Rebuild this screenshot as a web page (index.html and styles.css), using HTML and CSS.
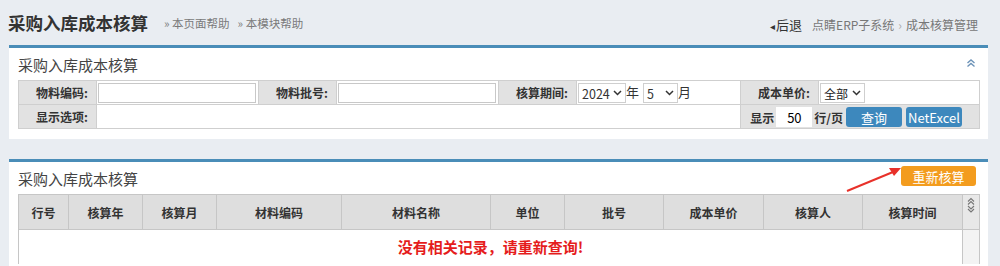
FILE: index.html
```html
<!DOCTYPE html>
<html lang="zh-CN">
<head>
    <meta charset="UTF-8">
    <meta name="viewport" content="width=device-width, initial-scale=1.0">
    <title>采购入库成本核算</title>
    <link rel="stylesheet" href="styles.css">
</head>
<body>
    <!-- Judul halaman dan breadcrumb -->
    <div class="page-header">
        <div class="page-title">
            <h1>采购入库成本核算</h1>
            <a class="help" href="#">» 本页面帮助</a>
            <a class="help" href="#">» 本模块帮助</a>
        </div>
        <div class="crumbs">
            <a class="back" href="#"><span class="tri">◂</span>后退</a>
            <span>点睛ERP子系统</span>
            <span class="sep">›</span>
            <span>成本核算管理</span>
        </div>
    </div>

    <!-- Panel pencarian -->
    <div class="panel">
        <div class="panel-head">
            <span class="panel-title">采购入库成本核算</span>
            <svg class="collapse" width="10" height="10" viewBox="0 0 10 10">
                <path d="M1.5 5 L5 2 L8.5 5 M1.5 8.5 L5 5.5 L8.5 8.5" fill="none" stroke="#6d93b8" stroke-width="1.4"/>
            </svg>
        </div>
        <table class="search">
            <colgroup>
                <col style="width:78px"><col style="width:162px">
                <col style="width:78px"><col style="width:162px">
                <col style="width:78px"><col style="width:164px">
                <col style="width:78px"><col style="width:161px">
            </colgroup>
            <tr>
                <td class="label">物料编码:</td>
                <td><input class="txt" type="text"></td>
                <td class="label">物料批号:</td>
                <td><input class="txt" type="text"></td>
                <td class="label">核算期间:</td>
                <td>
                    <span class="sel sel-year">2024<svg width="9" height="6" viewBox="0 0 9 6"><path d="M1 1 L4.5 4.5 L8 1" fill="none" stroke="#333" stroke-width="1.5"/></svg></span>年
                    <span class="sel sel-month">5<svg width="9" height="6" viewBox="0 0 9 6"><path d="M1 1 L4.5 4.5 L8 1" fill="none" stroke="#333" stroke-width="1.5"/></svg></span>月
                </td>
                <td class="label">成本单价:</td>
                <td><span class="sel sel-all">全部<svg width="9" height="6" viewBox="0 0 9 6"><path d="M1 1 L4.5 4.5 L8 1" fill="none" stroke="#333" stroke-width="1.5"/></svg></span></td>
            </tr>
            <tr>
                <td class="label">显示选项:</td>
                <td colspan="5"></td>
                <td colspan="2" class="actions"><span class="b">显示</span><input class="rows" type="text" value="50"><span class="b">行/页</span><button class="btn btn-blue btn-query">查询</button><button class="btn btn-blue">NetExcel</button></td>
            </tr>
        </table>
    </div>

    <!-- Panel hasil -->
    <div class="panel panel-result">
        <div class="panel-head">
            <span class="panel-title">采购入库成本核算</span>
            <button class="btn btn-orange">重新核算</button>
        </div>
        <table class="grid">
            <colgroup>
                <col style="width:50px"><col style="width:74px"><col style="width:74px">
                <col style="width:125px"><col style="width:149px"><col style="width:74px">
                <col style="width:99px"><col style="width:100px"><col style="width:99px">
                <col style="width:100px"><col style="width:17px">
            </colgroup>
            <tr>
                <th>行号</th>
                <th>核算年</th>
                <th>核算月</th>
                <th>材料编码</th>
                <th>材料名称</th>
                <th>单位</th>
                <th>批号</th>
                <th>成本单价</th>
                <th>核算人</th>
                <th>核算时间</th>
                <th class="scroll">
                    <svg width="10" height="16" viewBox="0 0 10 16">
                        <path d="M2 4.5 L5 1.5 L8 4.5 M2 7.5 L5 4.5 L8 7.5 M2 9 L5 12 L8 9 M2 12 L5 15 L8 12" fill="none" stroke="#777" stroke-width="1.1"/>
                    </svg>
                </th>
            </tr>
            <tr>
                <td colspan="10" class="empty">没有相关记录，请重新查询!</td>
                <td class="scroll-body"></td>
            </tr>
        </table>
        <!-- Panah petunjuk ke tombol -->
        <svg class="arrow" width="60" height="30" viewBox="0 0 60 30">
            <path d="M2 27 L48 8" stroke="#e8312a" stroke-width="2" fill="none"/>
            <path d="M56 4 L44 4 L49 12 Z" fill="#e8312a"/>
        </svg>
    </div>
</body>
</html>
```

FILE: styles.css
```css
/* Reset dasar */
* {
    margin: 0;
    padding: 0;
    box-sizing: border-box;
}

body {
    background-color: #e9edf2;
    font-family: "Noto Sans CJK SC", "Noto Sans", sans-serif;
    font-size: 13px;
    color: #333;
    width: 1000px;
    height: 266px;
    overflow: hidden;
}

a {
    text-decoration: none;
}

/* Header halaman */
.page-header {
    height: 45px;
    display: flex;
    justify-content: space-between;
    align-items: center;
    padding: 0 22px 0 8px;
}

.page-title {
    display: flex;
    align-items: center;
}

.page-title h1 {
    font-size: 17.5px;
    font-weight: bold;
    color: #333;
    margin-right: 16px;
}

.help {
    font-size: 11.5px;
    color: #7a7a7a;
    margin-right: 8px;
}

.crumbs {
    display: flex;
    align-items: center;
    font-size: 12px;
    color: #777;
    padding-top: 4px;
}

.crumbs .back {
    color: #333;
    font-size: 13px;
    margin-right: 10px;
}

.crumbs .tri {
    font-size: 10px;
    margin-right: 1px;
}

.crumbs .sep {
    margin: 0 4px;
    color: #aaa;
}

/* Panel */
.panel {
    position: relative;
    margin-left: 9px;
    width: 979px;
    background-color: #fff;
    border-top: 3px solid #4a8db8;
    padding: 0 9px 10px 9px;
}

.panel-head {
    height: 32px;
    display: flex;
    justify-content: space-between;
    align-items: center;
}

.panel-title {
    font-size: 15px;
    color: #444;
}

.collapse {
    margin-right: 3px;
    margin-top: -2px;
}

/* Tabel pencarian */
.search {
    width: 961px;
    border-collapse: collapse;
    table-layout: fixed;
}

.search td {
    height: 24px;
    border: 1px solid #cfcfcf;
    padding: 0 1px;
    white-space: nowrap;
}

.search .label {
    background-color: #e2e2e2;
    text-align: right;
    font-weight: bold;
    font-size: 12px;
    padding-right: 8px;
}

.txt {
    width: 158px;
    height: 20px;
    border: 1px solid #c8c8c8;
    font-family: inherit;
    display: block;
}

.sel {
    display: inline-flex;
    align-items: center;
    justify-content: space-between;
    gap: 2px;
    height: 20px;
    border: 1px solid #cfcfcf;
    background-color: #fff;
    padding: 0 3px;
    vertical-align: middle;
    font-size: 12.5px;
}

.sel svg {
    flex-shrink: 0;
}

.sel-year {
    width: 48px;
}

.sel-month {
    width: 35px;
    margin-left: 1px;
}

.sel-all {
    width: 45px;
    font-size: 12px;
    color: #222;
}

.actions {
    background-color: #e2e2e2;
    text-align: right;
    padding-right: 17px !important;
}

.b {
    font-weight: bold;
    font-size: 12px;
    vertical-align: middle;
}

.rows {
    width: 36px;
    height: 20px;
    border: none;
    text-align: center;
    font-family: inherit;
    font-size: 13px;
    margin: 0 2px;
    vertical-align: middle;
}

/* Tombol */
.btn {
    border: none;
    border-radius: 3px;
    color: #fff;
    font-family: inherit;
    font-size: 13px;
    cursor: pointer;
    vertical-align: middle;
}

.btn-blue {
    background-color: #3d88bd;
    height: 20px;
    width: 56px;
}

.btn-query {
    margin-left: 3px;
    margin-right: 4px;
}

.btn-orange {
    background-color: #f39c1e;
    width: 75px;
    height: 20px;
    align-self: flex-start;
    margin-top: 4px;
    margin-right: 3px;
}

/* Panel hasil */
.panel-result {
    margin-top: 20px;
    height: 200px;
}

.grid {
    width: 961px;
    border-collapse: collapse;
    table-layout: fixed;
}

.grid th {
    height: 35px;
    background-color: #dedede;
    border: 1px solid #c6c6c6;
    font-weight: bold;
    font-size: 12px;
}

.grid th.scroll {
    background-color: #e8e8e8;
    vertical-align: top;
    padding-top: 2px;
}

.empty {
    height: 34px;
    text-align: center;
    color: #e51c1c;
    font-size: 15px;
    font-weight: bold;
    border-left: 1px solid #c6c6c6;
}

.scroll-body {
    background-color: #f3f3f3;
    border-left: 1px solid #c6c6c6;
    border-right: 1px solid #c6c6c6;
}

.arrow {
    position: absolute;
    left: 836px;
    top: 2px;
}
```
